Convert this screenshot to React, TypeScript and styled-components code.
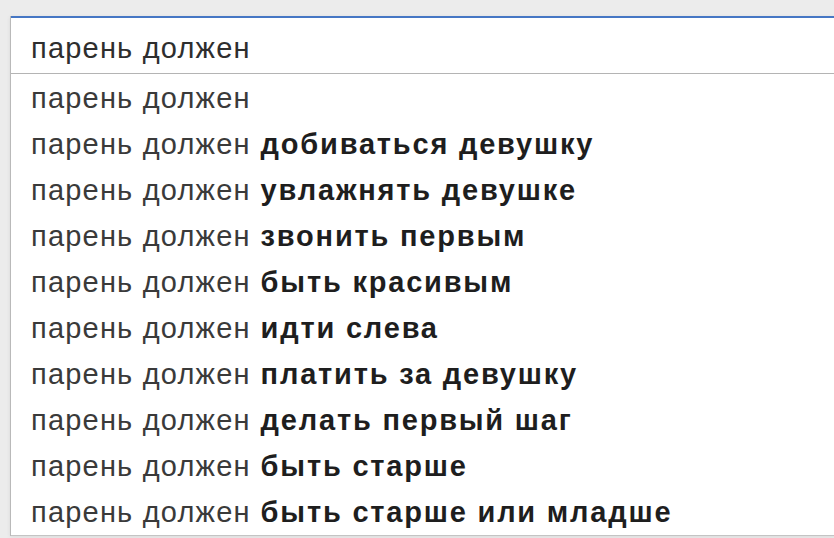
import React from 'react';
import styled, { createGlobalStyle } from 'styled-components';

const query = 'парень должен';

const suggestions = [
  '',
  'добиваться девушку',
  'увлажнять девушке',
  'звонить первым',
  'быть красивым',
  'идти слева',
  'платить за девушку',
  'делать первый шаг',
  'быть старше',
  'быть старше или младше',
];

const GlobalStyle = createGlobalStyle`
  html, body {
    margin: 0;
    padding: 0;
    background: #ececec;
    overflow: hidden;
  }
`;

const Page = styled.div`
  width: 834px;
  height: 538px;
  padding: 16px 0 0 10px;
  box-sizing: border-box;
  font-family: 'Liberation Sans', Arial, sans-serif;
`;

const SearchBox = styled.div`
  width: 824px;
  background: #fff;
  border-left: 1px solid #b9b9b9;
  box-shadow: 0 1px 4px rgba(0, 0, 0, 0.08);
`;

const Input = styled.div`
  border-top: 2px solid #4677c4;
  border-bottom: 1px solid #b4b4b4;
  padding: 7px 0 2px 20px;
  font-size: 29px;
  line-height: 46px;
  letter-spacing: 1.2px;
  color: #2e2e2e;
`;

const List = styled.ul`
  list-style: none;
  margin: 0;
  padding: 1px 0 0;
  border-bottom: 1px solid #c4c4c4;
  border-right: 1px solid #e4e4e4;
`;

const Row = styled.li`
  padding-left: 20px;
  font-size: 29px;
  line-height: 46px;
  height: 46px;
  letter-spacing: 1.2px;
  color: #3a3a3a;
  white-space: nowrap;
`;

const Completion = styled.b`
  font-weight: 700;
  letter-spacing: 1.8px;
  color: #1e1e1e;
`;

export default function App() {
  return (
    <>
      <GlobalStyle />
      <Page>
        <SearchBox>
          <Input>{query}</Input>
          <List>
            {suggestions.map((s, i) => (
              <Row key={i}>
                {query}
                {s && <Completion> {s}</Completion>}
              </Row>
            ))}
          </List>
        </SearchBox>
      </Page>
    </>
  );
}
